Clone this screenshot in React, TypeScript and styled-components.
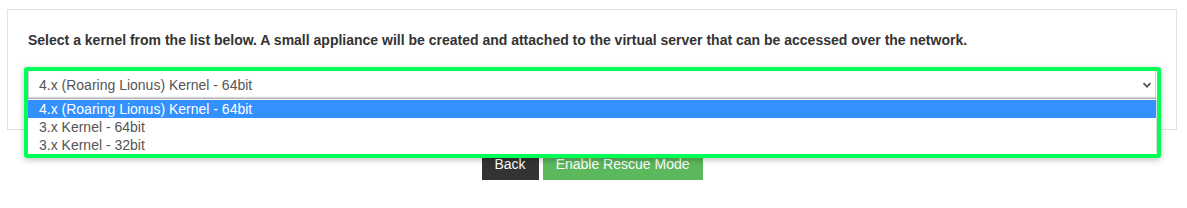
import React from 'react';
import styled, { createGlobalStyle } from 'styled-components';

const GlobalStyle = createGlobalStyle`
  html, body {
    margin: 0;
    padding: 0;
    background: #fff;
  }
  body {
    font-family: 'Liberation Sans', Arial, sans-serif;
    color: #333;
  }
`;

const Page = styled.div`
  padding: 9px 10px 0 7px;
`;

const Panel = styled.div`
  border: 1px solid #e2e2e2;
  padding: 20px 20px 29px 20px;
`;

const Intro = styled.p`
  margin: 0 0 20px 0;
  font-size: 14px;
  line-height: 20px;
  font-weight: bold;
  color: #333;
`;

const Field = styled.div`
  position: relative;
`;

const SelectBox = styled.div`
  display: flex;
  align-items: center;
  justify-content: space-between;
  height: 30px;
  box-sizing: border-box;
  border: 1px solid #ccc;
  border-radius: 2px;
  padding: 0 3px 0 10px;
  font-size: 14px;
  color: #555;
  background: #fff;
`;

const Chevron = styled.svg`
  width: 10px;
  height: 10px;
`;

const OptionList = styled.ul`
  position: absolute;
  left: 0;
  right: 0;
  top: 29px;
  margin: 0;
  padding: 1px 0 0 0;
  list-style: none;
  background: #fff;
  box-shadow: 0 -1px 2px rgba(0, 0, 0, 0.45);
  z-index: 2;
`;

const OptionItem = styled.li<{ $selected?: boolean }>`
  height: 18px;
  line-height: 18px;
  padding-left: 11px;
  font-size: 14px;
  color: ${p => (p.$selected ? '#fff' : '#555')};
  background: ${p => (p.$selected ? '#3390ff' : '#fff')};
`;

const Highlight = styled.div`
  position: absolute;
  left: -4px;
  right: -5px;
  top: -3px;
  height: 91px;
  box-sizing: border-box;
  border: 4.5px solid #00ff57;
  border-radius: 3px;
  box-shadow: 0 2px 6px rgba(0, 0, 0, 0.25);
  pointer-events: none;
  z-index: 3;
`;

const Actions = styled.div`
  display: flex;
  justify-content: center;
  gap: 4px;
  margin-top: 18px;
`;

const Button = styled.button<{ $variant: 'dark' | 'success' }>`
  border: 1px solid ${p => (p.$variant === 'dark' ? '#333' : '#5cb85c')};
  background: ${p => (p.$variant === 'dark' ? '#333' : '#5cb85c')};
  color: #fff;
  font-family: 'Liberation Sans', Arial, sans-serif;
  font-size: 14px;
  line-height: 20px;
  padding: 5px 12px;
  border-radius: 0;
  cursor: pointer;
`;

const kernels = [
  '4.x (Roaring Lionus) Kernel - 64bit',
  '3.x Kernel - 64bit',
  '3.x Kernel - 32bit',
];

export default function App() {
  const selected = 0;
  return (
    <Page>
      <GlobalStyle />
      <Panel>
        <Intro>
          Select a kernel from the list below. A small appliance will be created and attached to the virtual server that can be accessed over the network.
        </Intro>
        <Field>
          <SelectBox>
            <span>{kernels[selected]}</span>
            <Chevron viewBox="0 0 10 10">
              <path d="M1.5 3.2 L5 6.7 L8.5 3.2" fill="none" stroke="#555" strokeWidth="1.8" />
            </Chevron>
          </SelectBox>
          <OptionList>
            {kernels.map((k, i) => (
              <OptionItem key={k} $selected={i === selected}>
                {k}
              </OptionItem>
            ))}
          </OptionList>
          <Highlight />
        </Field>
      </Panel>
      <Actions>
        <Button $variant="dark">Back</Button>
        <Button $variant="success">Enable Rescue Mode</Button>
      </Actions>
    </Page>
  );
}
